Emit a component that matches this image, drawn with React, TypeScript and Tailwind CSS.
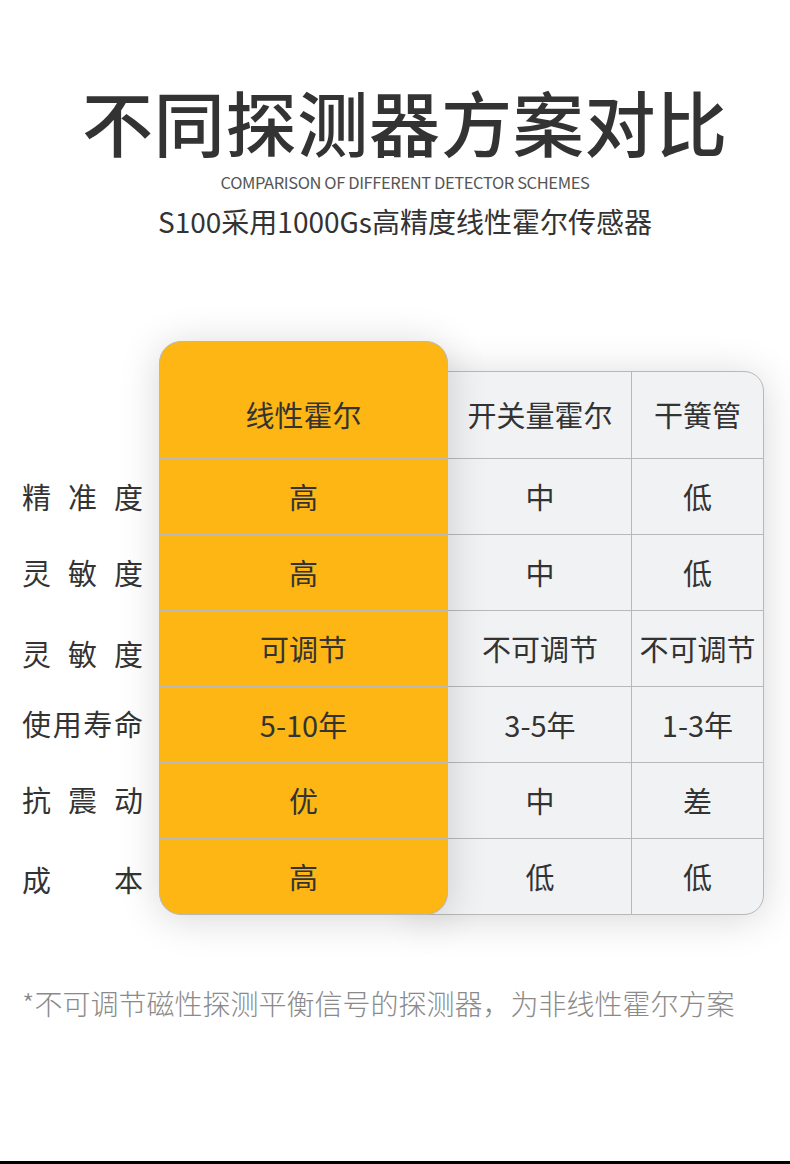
import React from 'react';

const FONT = { fontFamily: '"Noto Sans CJK SC", "Noto Sans", sans-serif' };

interface Row {
  label: string;
  linear: string;
  switchHall: string;
  reed: string;
  labelPad: string;
}

const rows: Row[] = [
  { label: '精准度', linear: '高', switchHall: '中', reed: '低', labelPad: 'pt-[2px]' },
  { label: '灵敏度', linear: '高', switchHall: '中', reed: '低', labelPad: 'pt-[2px]' },
  { label: '灵敏度', linear: '可调节', switchHall: '不可调节', reed: '不可调节', labelPad: 'pt-[12px]' },
  { label: '使用寿命', linear: '5-10年', switchHall: '3-5年', reed: '1-3年', labelPad: 'pt-0' },
  { label: '抗震动', linear: '优', switchHall: '中', reed: '差', labelPad: 'pt-0' },
  { label: '成本', linear: '高', switchHall: '低', reed: '低', labelPad: 'pt-[8px]' },
];

function Label({ text, pad }: { text: string; pad: string }) {
  return (
    <div className={`h-[76px] flex items-center justify-between ${pad}`}>
      {text.split('').map((ch, i) => (
        <span key={i}>{ch}</span>
      ))}
    </div>
  );
}

export default function App() {
  return (
    <div
      style={FONT}
      className="relative w-[790px] h-[1164px] bg-white border-b-[3px] border-black text-[#333] overflow-hidden"
    >
      {/* Heading */}
      <div className="pt-[84px] pl-[20px] flex flex-col items-center">
        <h1 className="text-[71px] leading-[72px] font-medium tracking-[0.8px]">不同探测器方案对比</h1>
        <p className="mt-[16px] text-[16.5px] leading-[20px] text-[#555] tracking-[-0.4px]">
          COMPARISON OF DIFFERENT DETECTOR SCHEMES
        </p>
        <p className="mt-[11px] text-[28px] leading-[36px]">S100采用1000Gs高精度线性霍尔传感器</p>
      </div>

      {/* Table */}
      <div className="mt-[102px] pl-[22px] flex items-start text-[29px]">
        <div className="w-[121px] pt-[117px] flex flex-col">
          {rows.map((r, i) => (
            <Label key={i} text={r.label} pad={r.labelPad} />
          ))}
        </div>

        <div className="ml-[16px] flex items-start">
          {/* Highlighted column */}
          <div className="relative z-10 w-[289px] bg-[#FDB614] rounded-[22px] border border-[#b8b8b8] shadow-[0_4px_40px_rgba(0,0,0,0.16)]">
            <div className="h-[116px] pt-[29px] flex items-center justify-center">线性霍尔</div>
            {rows.map((r, i) => (
              <div key={i} className="h-[76px] border-t border-[#b8b8b8] flex items-center justify-center">
                {r.linear}
              </div>
            ))}
          </div>

          {/* Other columns */}
          <div className="-ml-[30px] mt-[30px] w-[346px] bg-[#f1f2f4] rounded-r-[20px] border border-[#b8b8b8] overflow-hidden shadow-[0_4px_40px_rgba(0,0,0,0.16)]">
            <div className="h-[86px] flex">
              <div className="w-[213px] pl-[30px] border-r border-[#b8b8b8] flex items-center justify-center">开关量霍尔</div>
              <div className="flex-1 flex items-center justify-center">干簧管</div>
            </div>
            {rows.map((r, i) => (
              <div key={i} className="h-[76px] border-t border-[#b8b8b8] flex">
                <div className="w-[213px] pl-[30px] border-r border-[#b8b8b8] flex items-center justify-center">
                  {r.switchHall}
                </div>
                <div className="flex-1 flex items-center justify-center whitespace-nowrap">{r.reed}</div>
              </div>
            ))}
          </div>
        </div>
      </div>

      {/* Footnote */}
      <p className="mt-[70px] pl-[22px] text-[28px] leading-[36px] text-[#8a8a8a] font-light">
        *不可调节磁性探测平衡信号的探测器，为非线性霍尔方案
      </p>
    </div>
  );
}
